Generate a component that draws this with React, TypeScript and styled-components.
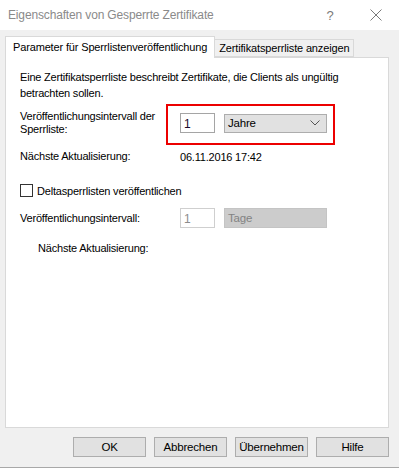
import React from "react";
import styled, { createGlobalStyle } from "styled-components";

const GlobalStyle = createGlobalStyle`
  html, body {
    margin: 0;
    padding: 0;
    background: #f0f0f0;
  }
`;

const Window = styled.div`
  width: 399px;
  height: 467px;
  background: #f0f0f0;
  border-bottom: 1px solid #a8a8a8;
  display: flex;
  flex-direction: column;
  font-family: "Liberation Sans", Arial, sans-serif;
  font-size: 11px;
  letter-spacing: -0.2px;
  color: #000;
  overflow: hidden;
`;

const TitleBar = styled.div`
  height: 30px;
  background: #fff;
  display: flex;
  align-items: center;
  padding: 0 0 0 8px;
  flex-shrink: 0;
`;

const Title = styled.div`
  flex: 1;
  font-size: 12px;
  letter-spacing: -0.15px;
  color: #8a8a8a;
`;

const HelpGlyph = styled.div`
  width: 46px;
  text-align: center;
  font-size: 13px;
  color: #7a7a7a;
`;

const CloseGlyph = styled.div`
  width: 46px;
  display: flex;
  justify-content: center;
  align-items: center;
`;

const TabStrip = styled.div`
  display: flex;
  align-items: flex-end;
  margin: 6px 0 0 5px;
  height: 21px;
  position: relative;
  z-index: 1;
`;

const Tab = styled.div<{ active?: boolean }>`
  box-sizing: border-box;
  height: ${(p) => (p.active ? "22px" : "18px")};
  margin-bottom: ${(p) => (p.active ? "-1px" : "0")};
  padding: ${(p) => (p.active ? "4px 7px 0" : "2px 4px 0")};
  background: ${(p) => (p.active ? "#fff" : "#f0f0f0")};
  border: 1px solid #d9d9d9;
  border-bottom: ${(p) => (p.active ? "none" : "1px solid #d9d9d9")};
  border-left: ${(p) => (p.active ? "1px solid #d9d9d9" : "none")};
  white-space: nowrap;
  font-size: 11px;
  letter-spacing: -0.15px;
`;

const Panel = styled.div`
  box-sizing: border-box;
  margin: 0 10px 0 5px;
  height: 371px;
  background: #fff;
  border: 1px solid #d9d9d9;
  padding: 11px 0 0 14px;
  display: flex;
  flex-direction: column;
`;

const Description = styled.div`
  line-height: 16px;
`;

const FieldRow = styled.div<{ indent?: number }>`
  display: grid;
  grid-template-columns: ${(p) => 160 - (p.indent || 0)}px auto;
  align-items: center;
  padding-left: ${(p) => p.indent || 0}px;
`;

const Label = styled.div`
  line-height: 13px;
`;

const Controls = styled.div`
  display: flex;
  align-items: center;
  gap: 9px;
  position: relative;
`;

const Highlight = styled.div`
  position: absolute;
  left: -14px;
  top: -9px;
  width: 169px;
  height: 41px;
  box-sizing: border-box;
  border: 2px solid #ec0000;
  pointer-events: none;
`;

const NumberBox = styled.div<{ disabled?: boolean }>`
  box-sizing: border-box;
  width: 35px;
  height: 20px;
  border: 1px solid ${(p) => (p.disabled ? "#cfcfcf" : "#a5a5a5")};
  background: #fff;
  color: ${(p) => (p.disabled ? "#8c8c8c" : "#1a0a2a")};
  padding: 3px 0 0 3px;
  font-size: 12px;
`;

const Select = styled.div<{ disabled?: boolean }>`
  box-sizing: border-box;
  width: 103px;
  height: ${(p) => (p.disabled ? "20px" : "19px")};
  border: 1px solid ${(p) => (p.disabled ? "#c4c4c4" : "#adadad")};
  background: ${(p) => (p.disabled ? "#cccccc" : "#e1e1e1")};
  color: ${(p) => (p.disabled ? "#838383" : "#000")};
  display: flex;
  align-items: center;
  justify-content: space-between;
  padding: 0 6px 0 3px;
  font-size: 11.5px;
`;

const CheckRow = styled.label`
  display: flex;
  align-items: center;
  gap: 4px;
`;

const CheckBox = styled.span`
  box-sizing: border-box;
  width: 13px;
  height: 13px;
  border: 1px solid #333;
  background: #fff;
`;

const ButtonBar = styled.div`
  display: flex;
  justify-content: flex-end;
  gap: 8px;
  padding: 9px 10px 0 0;
`;

const Button = styled.button`
  box-sizing: border-box;
  width: 73px;
  height: 20px;
  border: 1px solid #adadad;
  background: #e1e1e1;
  font-family: "Liberation Sans", Arial, sans-serif;
  font-size: 11.5px;
  letter-spacing: -0.2px;
  color: #000;
  padding: 0;
`;

const Chevron = () => (
  <svg width="10" height="6" viewBox="0 0 10 6">
    <path d="M0.5 0.5 L5 5 L9.5 0.5" fill="none" stroke="#555" strokeWidth="1" />
  </svg>
);

export default function App() {
  return (
    <>
      <GlobalStyle />
      <Window>
        <TitleBar>
          <Title>Eigenschaften von Gesperrte Zertifikate</Title>
          <HelpGlyph>?</HelpGlyph>
          <CloseGlyph>
            <svg width="12" height="12" viewBox="0 0 12 12">
              <path d="M0.5 0.5 L11.5 11.5 M11.5 0.5 L0.5 11.5" stroke="#7a7a7a" strokeWidth="1" />
            </svg>
          </CloseGlyph>
        </TitleBar>

        <TabStrip>
          <Tab active>Parameter für Sperrlistenveröffentlichung</Tab>
          <Tab>Zertifikatsperrliste anzeigen</Tab>
        </TabStrip>

        <Panel>
          <Description>
            Eine Zertifikatsperrliste beschreibt Zertifikate, die Clients als ungültig
            <br />
            betrachten sollen.
          </Description>

          <FieldRow style={{ marginTop: 9 }}>
            <Label>
              Veröffentlichungsintervall der
              <br />
              Sperrliste:
            </Label>
            <Controls>
              <NumberBox>1</NumberBox>
              <Select>
                Jahre
                <Chevron />
              </Select>
              <Highlight />
            </Controls>
          </FieldRow>

          <FieldRow style={{ marginTop: 14 }}>
            <Label>Nächste Aktualisierung:</Label>
            <div>06.11.2016 17:42</div>
          </FieldRow>

          <CheckRow style={{ marginTop: 21 }}>
            <CheckBox />
            Deltasperrlisten veröffentlichen
          </CheckRow>

          <FieldRow style={{ marginTop: 11 }}>
            <Label>Veröffentlichungsintervall:</Label>
            <Controls>
              <NumberBox disabled>1</NumberBox>
              <Select disabled>Tage</Select>
            </Controls>
          </FieldRow>

          <FieldRow indent={18} style={{ marginTop: 14 }}>
            <Label>Nächste Aktualisierung:</Label>
          </FieldRow>
        </Panel>

        <ButtonBar>
          <Button>OK</Button>
          <Button>Abbrechen</Button>
          <Button>Übernehmen</Button>
          <Button>Hilfe</Button>
        </ButtonBar>
      </Window>
    </>
  );
}
